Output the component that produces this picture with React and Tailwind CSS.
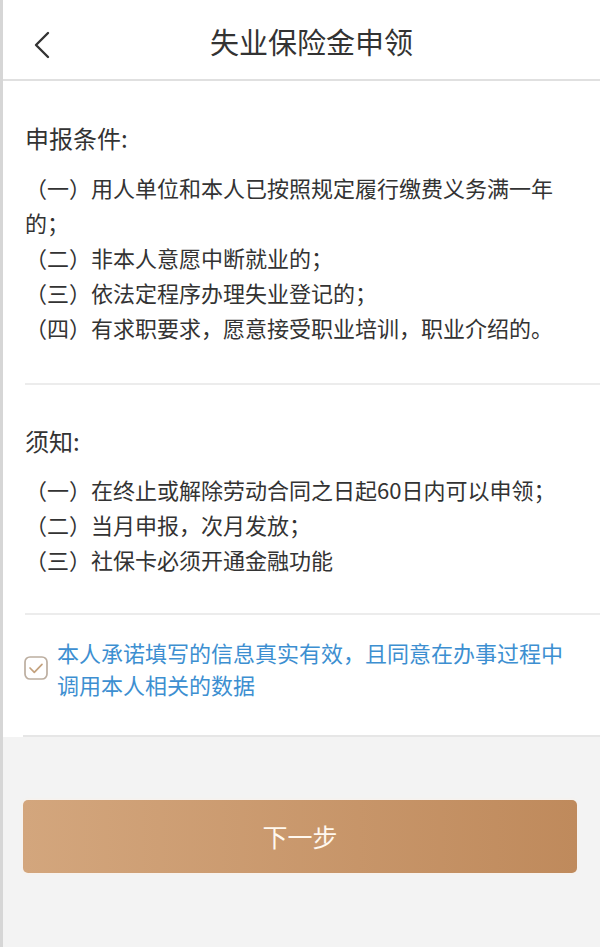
import React from "react";

const font = { fontFamily: '"Noto Sans CJK SC", "Noto Sans", sans-serif' };

export default function App() {
  return (
    <div
      className="flex min-h-[947px] w-[600px] flex-col border-l-[3px] border-[#d6d6d6] bg-[#f3f3f3]"
      style={font}
    >
      <div className="relative flex h-[81px] items-center justify-center border-b-2 border-[#e0e0e0] bg-white">
        <svg
          className="absolute left-[30px] top-[31px]"
          width="18"
          height="28"
          viewBox="0 0 18 28"
          fill="none"
        >
          <path d="M15 2 L3 14 L15 26" stroke="#333" strokeWidth="2.4" strokeLinecap="round" strokeLinejoin="round" />
        </svg>
        <div className="ml-[20px] mt-[4px] text-[29px] leading-none text-[#333]">失业保险金申领</div>
      </div>
      <div className="bg-white">
        <div className="ml-[22px] border-b-2 border-[#ececec] pr-[25px] pt-[38px] pb-[38px]">
          <div className="text-[24px] leading-[38px] text-[#333]">申报条件:</div>
          <div className="mt-[13px] text-[22px] leading-[35px] text-[#333]">
            <div>（一）用人单位和本人已按照规定履行缴费义务满一年的；</div>
            <div>（二）非本人意愿中断就业的；</div>
            <div>（三）依法定程序办理失业登记的；</div>
            <div>（四）有求职要求，愿意接受职业培训，职业介绍的。</div>
          </div>
        </div>
        <div className="ml-[22px] border-b-2 border-[#ececec] pr-[25px] pt-[37px] pb-[36px]">
          <div className="text-[24px] leading-[38px] text-[#333]">须知:</div>
          <div className="mt-[12px] text-[22px] leading-[35px] text-[#333]">
            <div>（一）在终止或解除劳动合同之日起60日内可以申领；</div>
            <div>（二）当月申报，次月发放；</div>
            <div>（三）社保卡必须开通金融功能</div>
          </div>
        </div>
        <div className="ml-[20px] flex items-center gap-[8px] border-b-2 border-[#e6e6e6] pt-[21px] pb-[35px] pr-[25px]">
          <svg width="26" height="26" viewBox="0 0 26 26" fill="none" className="shrink-0">
            <rect x="2" y="2" width="22" height="22" rx="5" stroke="#bcaea0" strokeWidth="1.7" />
            <path d="M7 13 L11.3 17.3 L19 9.3" stroke="#c4a27e" strokeWidth="1.7" strokeLinecap="round" strokeLinejoin="round" />
          </svg>
          <div className="text-[22px] leading-[32px] text-[#3d8fd1]">
            本人承诺填写的信息真实有效，且同意在办事过程中调用本人相关的数据
          </div>
        </div>
      </div>
      <div className="pl-[20px] pr-[23px] pt-[63px]">
        <div className="flex h-[73px] items-center justify-center rounded-[5px] bg-gradient-to-r from-[#d3a67d] to-[#bf8a5c] shadow-[0_0_3px_rgba(255,240,225,0.9)]">
          <span className="text-[25px] text-[#fff8ef]">下一步</span>
        </div>
      </div>
    </div>
  );
}
